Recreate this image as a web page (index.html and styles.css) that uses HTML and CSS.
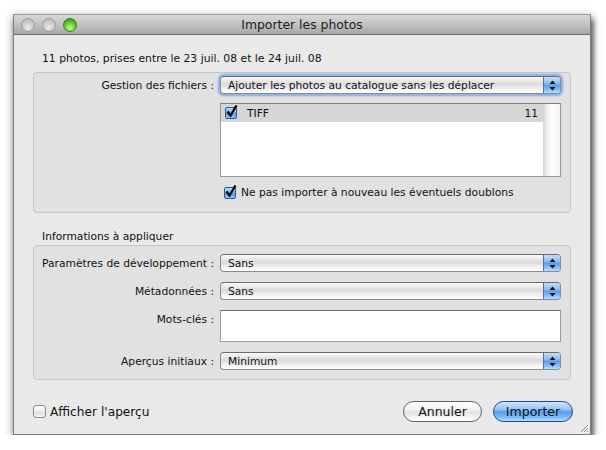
FILE: index.html
```html
<!DOCTYPE html>
<html lang="fr">
<head>
<meta charset="utf-8">
<title>Importer les photos</title>
<link rel="stylesheet" href="styles.css">
</head>
<body>
<div class="window">
  <div class="titlebar">
    <div class="lights">
      <span class="light off"></span>
      <span class="light off"></span>
      <span class="light on"></span>
    </div>
    <div class="title">Importer les photos</div>
  </div>
  <div class="content">
    <div class="summary">11 photos, prises entre le 23 juil. 08 et le 24 juil. 08</div>
    <div class="group g1">
      <div class="label">Gestion des fichiers :</div>
      <div class="popup focus"><span class="ptext">Ajouter les photos au catalogue sans les déplacer</span><span class="arrows"><svg width="7" height="11" viewBox="0 0 7 11"><path d="M3.5 0.5 L6.5 4 L0.5 4 Z M0.5 7 L6.5 7 L3.5 10.5 Z" fill="#111"/></svg></span></div>
      <div class="spacer"></div>
      <div class="list">
        <div class="rows">
          <div class="lrow"><span class="cb on"><svg width="14" height="14" viewBox="0 0 14 14"><path d="M2.5 6.5 L5.5 10.5 L11.5 0.5" fill="none" stroke="#000" stroke-width="2.2"/></svg></span><span class="ltext">TIFF</span><span class="lcount">11</span></div>
        </div>
        <div class="scroll"></div>
      </div>
      <div class="spacer"></div>
      <div class="checkrow"><span class="cb on"><svg width="14" height="14" viewBox="0 0 14 14"><path d="M2.5 6.5 L5.5 10.5 L11.5 0.5" fill="none" stroke="#000" stroke-width="2.2"/></svg></span><span>Ne pas importer à nouveau les éventuels doublons</span></div>
    </div>
    <div class="section-title">Informations à appliquer</div>
    <div class="group g2">
      <div class="label">Paramètres de développement :</div>
      <div class="popup"><span class="ptext">Sans</span><span class="arrows"><svg width="7" height="11" viewBox="0 0 7 11"><path d="M3.5 0.5 L6.5 4 L0.5 4 Z M0.5 7 L6.5 7 L3.5 10.5 Z" fill="#111"/></svg></span></div>
      <div class="label">Métadonnées :</div>
      <div class="popup"><span class="ptext">Sans</span><span class="arrows"><svg width="7" height="11" viewBox="0 0 7 11"><path d="M3.5 0.5 L6.5 4 L0.5 4 Z M0.5 7 L6.5 7 L3.5 10.5 Z" fill="#111"/></svg></span></div>
      <div class="label top">Mots-clés :</div>
      <div class="textfield"></div>
      <div class="label">Aperçus initiaux :</div>
      <div class="popup"><span class="ptext">Minimum</span><span class="arrows"><svg width="7" height="11" viewBox="0 0 7 11"><path d="M3.5 0.5 L6.5 4 L0.5 4 Z M0.5 7 L6.5 7 L3.5 10.5 Z" fill="#111"/></svg></span></div>
    </div>
    <div class="footer">
      <div class="checkrow big"><span class="cb"></span><span>Afficher l'aperçu</span></div>
      <div class="buttons">
        <div class="btn">Annuler</div>
        <div class="btn primary">Importer</div>
      </div>
    </div>
  </div>
  <svg class="grip" width="10" height="10" viewBox="0 0 10 10"><path d="M9 2 L2 9 M9 5 L5 9 M9 8 L8 9" stroke="#8a8a8a" stroke-width="1"/><path d="M10 3 L3 10 M10 6 L6 10" stroke="#fff" stroke-width="1"/></svg>
</div>
</body>
</html>
```
FILE: styles.css
```css
html, body {
  margin: 0;
  padding: 0;
  background: #ffffff;
}
body {
  font-family: "DejaVu Sans", "Liberation Sans", sans-serif;
  font-size: 10.7px;
  color: #111;
}
.window {
  position: relative;
  margin: 14px 0 0 13px;
  width: 578px;
  height: 421px;
  box-sizing: border-box;
  border: 1px solid #7e7e7e;
  border-top-color: #9a9a9a;
  background: #e9e9e9;
  box-shadow: 2px 5px 6px rgba(0,0,0,0.7), 0 2px 10px rgba(0,0,0,0.25);
  display: flex;
  flex-direction: column;
}
.titlebar {
  height: 19px;
  border-bottom: 1px solid #6a6a6a;
  background: linear-gradient(#d8d8d8, #c2c2c2 50%, #a7a7a7);
  display: flex;
  align-items: center;
  position: relative;
}
.lights {
  display: flex;
  gap: 7px;
  padding-left: 7px;
  padding-top: 1px;
}
.light {
  width: 14px;
  height: 14px;
  box-sizing: border-box;
  border-radius: 50%;
}
.light.off {
  border: 1px solid #9c9c9c;
  background: radial-gradient(circle at 50% 70%, #ececec 0%, #cfcfcf 45%, #b3b3b3 100%);
}
.light.on {
  border: 1px solid #3f7f1d;
  background: radial-gradient(circle at 50% 75%, #c8ff8c 0%, #76d63b 40%, #45a414 75%, #2f7f0b 100%);
}
.title {
  position: absolute;
  left: 0;
  right: 0;
  text-align: center;
  font-size: 12.4px;
  color: #1c1c1c;
  top: 2px;
}
.content {
  flex: 1;
  padding: 17px 19px 0 19px;
  display: flex;
  flex-direction: column;
}
.summary {
  line-height: 14px;
  padding-left: 9px;
  margin-bottom: 6px;
  font-size: 10.8px;
}
.group {
  border: 1px solid #c6c6c6;
  border-radius: 4px;
  background: #e1e1e1;
  display: grid;
  grid-template-columns: 180px 341px;
  column-gap: 6px;
}
.g1 {
  padding: 3px 9px 12px 0;
  grid-template-rows: 18px 74px 14px;
  row-gap: 9px;
}
.g1 .checkrow {
  margin-top: -1px;
}
.g2 {
  padding: 8px 9px 9px 0;
  grid-template-rows: 18px 18px 32px 18px;
  row-gap: 10px;
}
.label {
  text-align: right;
  align-self: center;
  white-space: nowrap;
}
.label.top {
  align-self: start;
  padding-top: 3px;
}
.popup {
  box-sizing: border-box;
  height: 18px;
  border: 1px solid #8a8a8a;
  border-top-color: #6c6c6c;
  border-radius: 4px;
  background: linear-gradient(#fbfbfb 0%, #e9e9e9 25%, #d9d9d9 45%, #eeeeee 70%, #ffffff 100%);
  display: flex;
  align-items: center;
  overflow: hidden;
}
.popup.focus {
  box-shadow: 0 0 0 1px #8fb5e8, 0 0 2px 2px #7ea8e2;
}
.ptext {
  padding-left: 7px;
  white-space: nowrap;
}
.arrows {
  margin-left: auto;
  width: 17px;
  align-self: stretch;
  box-sizing: border-box;
  border-left: 1px solid #4e72ad;
  background: linear-gradient(#c4def9 0%, #8dbdf1 40%, #5d9de9 52%, #86c1f6 80%, #b8e2fd 100%);
  display: flex;
  align-items: center;
  justify-content: center;
}
.arrows svg {
  display: block;
}
.textfield {
  box-sizing: border-box;
  background: #ffffff;
  border: 1px solid #9c9c9c;
  border-top-color: #6f6f6f;
}
.list {
  box-sizing: border-box;
  border: 1px solid #9a9a9a;
  border-top-color: #7d7d7d;
  background: #fff;
  display: flex;
}
.rows {
  flex: 1;
}
.lrow {
  height: 18px;
  background: #d6d6d6;
  display: flex;
  align-items: center;
  padding: 0 5px 0 4px;
}
.ltext {
  margin-left: 10px;
}
.lcount {
  margin-left: auto;
}
.scroll {
  width: 17px;
  background: linear-gradient(90deg, #d4d4d4 0%, #efefef 25%, #ffffff 55%, #f2f2f2 100%);
}
.cb {
  position: relative;
  width: 12px;
  height: 12px;
  box-sizing: border-box;
  border: 1px solid #6f6f6f;
  border-radius: 2px;
  background: linear-gradient(#ffffff, #ececec 50%, #dcdcdc 55%, #f7f7f7);
  flex: none;
}
.cb.on {
  border-color: #34568f;
  background: linear-gradient(#bcd9f8 0%, #80b6f0 45%, #5596e6 55%, #8ccaf8 100%);
}
.cb svg {
  position: absolute;
  left: -1px;
  top: -3px;
}
.checkrow {
  display: flex;
  align-items: center;
  gap: 5px;
  padding-left: 4px;
  white-space: nowrap;
}
.section-title {
  line-height: 14px;
  margin-top: 17px;
  margin-bottom: 1px;
  padding-left: 9px;
}
.footer {
  display: flex;
  align-items: center;
  justify-content: space-between;
  padding-top: 21px;
  margin-right: -2px;
}
.checkrow.big {
  font-size: 12.2px;
  padding-left: 0;
  gap: 4px;
}
.checkrow.big .cb {
  width: 13px;
  height: 13px;
  border-color: #8a8a8a;
  border-radius: 3px;
}
.buttons {
  display: flex;
  gap: 11px;
}
.btn {
  box-sizing: border-box;
  width: 79px;
  height: 21px;
  border-radius: 11px;
  border: 1px solid #5f5f5f;
  background: linear-gradient(#ffffff 0%, #f3f3f3 40%, #e2e2e2 52%, #f4f4f4 80%, #ffffff 100%);
  font-size: 12.5px;
  line-height: 19px;
  text-align: center;
  color: #111;
}
.btn.primary {
  width: 80px;
  border-color: #23438a;
  background: linear-gradient(#cfe5fc 0%, #93c3f5 40%, #5b9ceb 52%, #7cbcf6 80%, #b0e0fe 100%);
}
.grip {
  position: absolute;
  right: 1px;
  bottom: 1px;
}
```
